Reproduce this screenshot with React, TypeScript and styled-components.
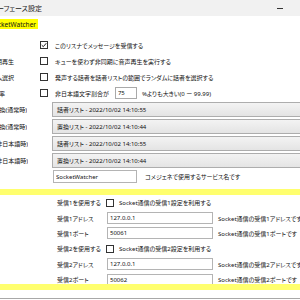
import styled, { createGlobalStyle } from "styled-components";

const GlobalStyle = createGlobalStyle`
  html, body {
    margin: 0;
    padding: 0;
    width: 300px;
    height: 300px;
    overflow: hidden;
    background: #ffffff;
  }
  body {
    font-family: "Noto Sans", "Noto Sans CJK JP", sans-serif;
    font-size: 6px;
    font-feature-settings: "palt";
    color: #111111;
  }
`;

const Window = styled.div`
  width: 300px;
  height: 300px;
  display: flex;
  flex-direction: column;
  overflow: hidden;
`;

const TitleBar = styled.div`
  height: 16px;
  flex: none;
  background: #f1f1f1;
  display: flex;
  align-items: center;
  justify-content: space-between;
`;

// clips text on the left, like a window scrolled out of view
const Clip = styled.div<{ $w: number }>`
  width: ${(p) => p.$w}px;
  flex: none;
  display: flex;
  justify-content: flex-end;
  overflow: hidden;
  white-space: nowrap;
`;

const TitleText = styled.span`
  font-size: 7px;
  color: #1b1b1b;
`;

const Minimize = styled.span`
  width: 6px;
  height: 1px;
  background: #333333;
  margin-right: 17px;
`;

const TreeArea = styled.div`
  padding-top: 3px;
  height: 18px;
  flex: none;
`;

const SelectedNode = styled(Clip)`
  height: 10px;
  align-items: center;
  background: #ffff00;
  font-size: 6.5px;
  color: #111111;
  padding-right: 2px;
  box-sizing: border-box;
`;

const Section = styled.div`
  display: flex;
  flex-direction: column;
  flex: none;
`;

const Row = styled.div<{ $h: number }>`
  height: ${(p) => p.$h}px;
  display: flex;
  align-items: center;
  white-space: nowrap;
`;

const SideLabel = styled(Clip)`
  margin-right: 2px;
`;

const Box = styled.span`
  width: 8px;
  height: 8px;
  flex: none;
  box-sizing: border-box;
  border: 1px solid #333333;
  background: #ffffff;
  display: flex;
  align-items: center;
  justify-content: center;
`;

const CheckText = styled.span`
  margin-left: 7px;
`;

const SmallInput = styled.input`
  font: inherit;
  width: 22px;
  height: 12px;
  box-sizing: border-box;
  border: 1px solid #a9a9a9;
  padding: 0 2px;
  margin: 0 5px 0 6px;
  color: #111111;
  outline: none;
`;

const Combo = styled.div`
  margin-left: 12px;
  width: 270px;
  height: 15px;
  flex: none;
  box-sizing: border-box;
  border: 1px solid #adadad;
  background: linear-gradient(#f3f3f3, #e4e4e4);
  display: flex;
  align-items: center;
  padding-left: 4px;
`;

const TextBox = styled.input<{ $w: number; $ml: number }>`
  font: inherit;
  width: ${(p) => p.$w}px;
  margin-left: ${(p) => p.$ml}px;
  height: 13px;
  flex: none;
  box-sizing: border-box;
  border: 1px solid #b4b4b4;
  padding: 0 2px;
  color: #111111;
  outline: none;
  background: #ffffff;
`;

const Note = styled.span<{ $ml: number }>`
  margin-left: ${(p) => p.$ml}px;
`;

const Band = styled.div<{ $mt: number }>`
  height: 6px;
  flex: none;
  margin-top: ${(p) => p.$mt}px;
  background: #ffff6e;
`;

const Indented = styled.div`
  display: flex;
  flex-direction: column;
  padding-left: 57px;
`;

const FieldLabel = styled.span`
  width: 49px;
  flex: none;
`;

const BottomEdge = styled.div`
  margin-top: 8px;
  height: 1px;
  background: #a8a8a8;
`;

function Check({ on }: { on?: boolean }) {
  return (
    <Box>
      {on && (
        <svg width="6" height="6" viewBox="0 0 6 6">
          <path d="M0.7 3.1 L2.3 4.7 L5.3 1.2" fill="none" stroke="#222" strokeWidth="1" />
        </svg>
      )}
    </Box>
  );
}

const combos = [
  { label: "置換(通常時)", w: 27, text: "話者リスト - 2022/10/02 14:10:55" },
  { label: "置換(通常時)", w: 27, text: "置換リスト - 2022/10/02 14:10:44" },
  { label: "置換(非日本語時)", w: 28, text: "話者リスト - 2022/10/02 14:10:55" },
  { label: "置換(非日本語時)", w: 28, text: "置換リスト - 2022/10/02 14:10:44" },
];

const receivers = [1, 2];

export default function App() {
  return (
    <Window>
      <GlobalStyle />
      <TitleBar>
        <Clip $w={42}>
          <TitleText>インターフェース設定</TitleText>
        </Clip>
        <Minimize />
      </TitleBar>
      <TreeArea>
        <SelectedNode $w={38}>SocketWatcher</SelectedNode>
      </TreeArea>
      <Section>
        <Row $h={16} style={{ paddingLeft: 40 }}>
          <Check on />
          <CheckText>このリスナでメッセージを受信する</CheckText>
        </Row>
        <Row $h={16}>
          <SideLabel $w={38}>
            <span style={{ paddingRight: 24 }}>非同期再生</span>
          </SideLabel>
          <Check />
          <CheckText>キューを使わず非同期に音声再生を実行する</CheckText>
        </Row>
        <Row $h={16}>
          <SideLabel $w={38}>
            <span style={{ paddingRight: 24 }}>ランダム選択</span>
          </SideLabel>
          <Check />
          <CheckText>発声する話者を話者リストの範囲でランダムに話者を選択する</CheckText>
        </Row>
        <Row $h={16}>
          <SideLabel $w={38}>
            <span style={{ paddingRight: 33 }}>非日本語率</span>
          </SideLabel>
          <Check />
          <CheckText>非日本語文字割合が</CheckText>
          <SmallInput readOnly defaultValue="75" />
          <span>%よりも大きい(0 ー 99.99)</span>
        </Row>
        {combos.map((c, i) => (
          <Row $h={17} key={i}>
            <Clip $w={c.w}>{c.label}</Clip>
            <Combo style={{ marginLeft: 52 - c.w }}>{c.text}</Combo>
          </Row>
        ))}
        <Row $h={15}>
          <TextBox readOnly defaultValue="SocketWatcher" $w={84} $ml={53} />
          <Note $ml={8}>コメジェネで使用するサービス名です</Note>
        </Row>
      </Section>
      <Band $mt={5} />
      <Indented>
        {receivers.map((n) => (
          <Section key={n}>
            <Row $h={15.4}>
              <FieldLabel>受信{n}を使用する</FieldLabel>
              <Check />
              <CheckText style={{ marginLeft: 5 }}>Socket通信の受信{n}設定を利用する</CheckText>
            </Row>
            <Row $h={15.4}>
              <FieldLabel>受信{n}アドレス</FieldLabel>
              <TextBox readOnly defaultValue="127.0.0.1" $w={106} $ml={1} style={{ height: 12 }} />
              <Note $ml={5}>Socket通信の受信{n}アドレスです</Note>
            </Row>
            <Row $h={15.4}>
              <FieldLabel>受信{n}ポート</FieldLabel>
              <TextBox readOnly defaultValue={`5006${n}`} $w={106} $ml={1} style={{ height: 12 }} />
              <Note $ml={5}>Socket通信の受信{n}ポートです</Note>
            </Row>
          </Section>
        ))}
      </Indented>
      <Band $mt={-3} />
      <BottomEdge />
    </Window>
  );
}
